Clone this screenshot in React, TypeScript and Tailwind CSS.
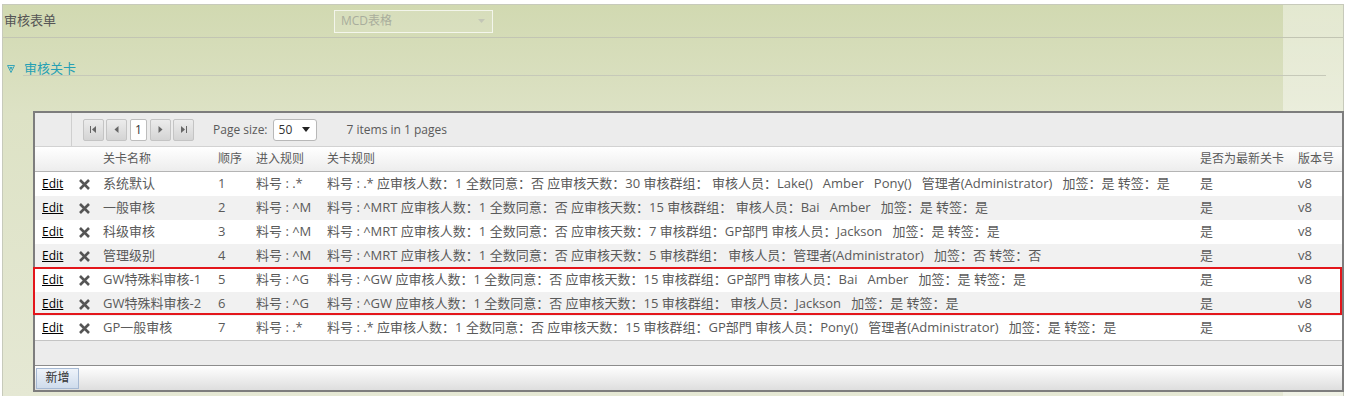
import React from "react";

type Row = {
  name: string;
  order: string;
  entry: string;
  rule: string;
};

const rows: Row[] = [
  {
    name: "系统默认",
    order: "1",
    entry: "料号 : .*",
    rule: "料号 : .* 应审核人数：1 全数同意：否 应审核天数：30 审核群组： 审核人员：Lake()   Amber   Pony()   管理者(Administrator)   加签：是 转签：是",
  },
  {
    name: "一般审核",
    order: "2",
    entry: "料号 : ^M",
    rule: "料号 : ^MRT 应审核人数：1 全数同意：否 应审核天数：15 审核群组： 审核人员：Bai   Amber   加签：是 转签：是",
  },
  {
    name: "科级审核",
    order: "3",
    entry: "料号 : ^M",
    rule: "料号 : ^MRT 应审核人数：1 全数同意：否 应审核天数：7 审核群组：GP部門 审核人员：Jackson   加签：是 转签：是",
  },
  {
    name: "管理级别",
    order: "4",
    entry: "料号 : ^M",
    rule: "料号 : ^MRT 应审核人数：1 全数同意：否 应审核天数：5 审核群组： 审核人员：管理者(Administrator)   加签：否 转签：否",
  },
  {
    name: "GW特殊料审核-1",
    order: "5",
    entry: "料号 : ^G",
    rule: "料号 : ^GW 应审核人数：1 全数同意：否 应审核天数：15 审核群组：GP部門 审核人员：Bai   Amber   加签：是 转签：是",
  },
  {
    name: "GW特殊料审核-2",
    order: "6",
    entry: "料号 : ^G",
    rule: "料号 : ^GW 应审核人数：1 全数同意：否 应审核天数：15 审核群组： 审核人员：Jackson   加签：是 转签：是",
  },
  {
    name: "GP一般审核",
    order: "7",
    entry: "料号 : .*",
    rule: "料号 : .* 应审核人数：1 全数同意：否 应审核天数：15 审核群组：GP部門 审核人员：Pony()   管理者(Administrator)   加签：是 转签：是",
  },
];

const cols = "grid grid-cols-[37px_24px_115px_38px_71px_873px_98px_1fr]";

function DeleteIcon() {
  return (
    <svg width="11" height="11" viewBox="0 0 11 11">
      <path d="M1 1 L10 10 M10 1 L1 10" stroke="#555" strokeWidth="2.6" />
    </svg>
  );
}

function PagerButton({ kind }: { kind: "first" | "prev" | "next" | "last" }) {
  return (
    <div className="flex h-[22px] w-[21px] items-center justify-center rounded-[2px] border border-[#c4c4c4] bg-gradient-to-b from-[#ececec] to-[#d4d4d4]">
      <svg width="9" height="9" viewBox="0 0 9 9">
        {kind === "first" && (
          <>
            <rect x="1" y="1" width="1" height="7" fill="#666" />
            <path d="M7 1 L3 4.5 L7 8 Z" fill="#666" />
          </>
        )}
        {kind === "prev" && <path d="M6.5 1 L2.5 4.5 L6.5 8 Z" fill="#666" />}
        {kind === "next" && <path d="M2.5 1 L6.5 4.5 L2.5 8 Z" fill="#666" />}
        {kind === "last" && (
          <>
            <path d="M2 1 L6 4.5 L2 8 Z" fill="#666" />
            <rect x="7" y="1" width="1" height="7" fill="#666" />
          </>
        )}
      </svg>
    </div>
  );
}

function DataRow({ row, index }: { row: Row; index: number }) {
  return (
    <div
      className={`${cols} h-[24px] items-center text-[13px] text-[#5a5a5a] ${
        index % 2 === 1 ? "bg-[#f1f1f1]" : "bg-white"
      }`}
    >
      <div className="pl-[7px] text-[12px]">
        <span className="text-black underline underline-offset-[1px]">Edit</span>
      </div>
      <div className="flex pl-[7px]">
        <DeleteIcon />
      </div>
      <div className="pl-[7px] whitespace-nowrap">{row.name}</div>
      <div className="pl-[7px]">{row.order}</div>
      <div className="pl-[7px] whitespace-nowrap">{row.entry}</div>
      <div className="pl-[7px] whitespace-pre">{row.rule}</div>
      <div className="pl-[7px]">是</div>
      <div className="pl-[7px]">v8</div>
    </div>
  );
}

export default function App() {
  return (
    <div className="h-[396px] w-[1347px] overflow-hidden bg-white pl-[2px] pr-[3px] pt-[4px] [font-family:'Open_Sans','Noto_Sans_CJK_SC',sans-serif]">
      <div className="h-full border-l border-r border-t border-[#c7cabb] bg-[image:linear-gradient(to_right,transparent_1280px,rgba(255,255,255,0.4)_1280px),linear-gradient(to_bottom,#d1d9b1,#dde2c5_110px,#e5e8d4)]">
        {/* 审核表单 */}
        <div className="flex h-[33px] items-center border-b border-[#c2c5b3]">
          <div className="w-[331px] pl-[1px] text-[13px] text-[#555]">审核表单</div>
          <div className="flex h-[23px] w-[159px] items-center justify-between border border-[rgba(255,255,255,0.7)] bg-[rgba(255,255,255,0.12)] pl-[6px] pr-[7px] text-[12px] text-[#a9ad9c]">
            <span>MCD表格</span>
            <svg width="7" height="4" viewBox="0 0 7 4">
              <path d="M0 0 L7 0 L3.5 4 Z" fill="#c3c6b6" />
            </svg>
          </div>
        </div>

        {/* 审核关卡 */}
        <div className="flex h-[38px] items-end">
          <div className="flex h-[14px] w-[20px] items-center pl-[4px]">
            <svg width="8" height="8" viewBox="0 0 8 8">
              <path d="M0.5 0.5 L7.5 0.5 L4 7.5 Z" fill="none" stroke="#3aa6b8" strokeWidth="1" />
              <path d="M2.3 2 L5.7 2 L4 5.2 Z" fill="#3aa6b8" />
            </svg>
          </div>
          <div className="mr-[17px] flex-1 border-b border-[#c6c9b9] pl-[1px] text-[13px] leading-[14px] text-[#26a0b4]">
            审核关卡
          </div>
        </div>

        {/* grid */}
        <div className="ml-[30px] mt-[35px] flex h-[281px] w-[1311px] flex-col border-2 border-[#7d7d7d] bg-[#ececec]">
          {/* pager */}
          <div className="flex h-[33px] items-center text-[12px] text-[#5a5a5a]">
            <div className="h-full w-[37px] border-r border-[#cfcfcf]" />
            <div className="ml-[11px] flex items-center gap-[2px]">
              <PagerButton kind="first" />
              <PagerButton kind="prev" />
              <div className="mx-[1px] flex h-[22px] w-[17px] items-center justify-center rounded-[2px] border border-[#bdbdbd] bg-white text-[12px] text-[#333]">
                1
              </div>
              <PagerButton kind="next" />
              <PagerButton kind="last" />
            </div>
            <span className="ml-[19px]">Page size:</span>
            <div className="ml-[5px] flex h-[22px] w-[44px] items-center justify-between rounded-[3px] border border-[#b8b8b8] bg-white pl-[5px] pr-[6px] text-[#333]">
              <span>50</span>
              <svg width="8" height="5" viewBox="0 0 8 5">
                <path d="M0 0 L8 0 L4 5 Z" fill="#222" />
              </svg>
            </div>
            <span className="ml-[30px]">7 items in 1 pages</span>
          </div>

          {/* header */}
          <div
            className={`${cols} h-[26px] items-center border-b border-t border-b-[#b4b4b4] border-t-[#d2d2d2] bg-gradient-to-b from-white to-[#ededed] text-[12px] text-[#5a5a5a]`}
          >
            <div />
            <div />
            <div className="pl-[7px]">关卡名称</div>
            <div className="pl-[7px]">顺序</div>
            <div className="pl-[7px]">进入规则</div>
            <div className="pl-[7px]">关卡规则</div>
            <div className="pl-[7px] whitespace-nowrap">是否为最新关卡</div>
            <div className="pl-[7px] whitespace-nowrap">版本号</div>
          </div>

          {/* rows */}
          <div className="border-b border-[#c4c4c4]">
            {rows.slice(0, 4).map((r, i) => (
              <DataRow key={r.name} row={r} index={i} />
            ))}
            <div className="relative">
              {rows.slice(4, 6).map((r, i) => (
                <DataRow key={r.name} row={r} index={i + 4} />
              ))}
              <div className="pointer-events-none absolute -left-[2px] -top-[1px] bottom-[1px] right-0 border-2 border-[#e3161b]" />
            </div>
            <DataRow row={rows[6]} index={6} />
          </div>

          <div className="flex-1" />

          {/* toolbar */}
          <div className="flex h-[25px] items-center border-t border-[#8c8c8c] bg-gradient-to-b from-white to-[#dedede] pl-[1px]">
            <div className="flex h-[21px] w-[43px] items-center justify-center border border-[#a6b9d3] bg-gradient-to-b from-[#eef3fa] to-[#cfdcec] text-[12px] text-[#333]">
              新增
            </div>
          </div>
        </div>
      </div>
    </div>
  );
}
